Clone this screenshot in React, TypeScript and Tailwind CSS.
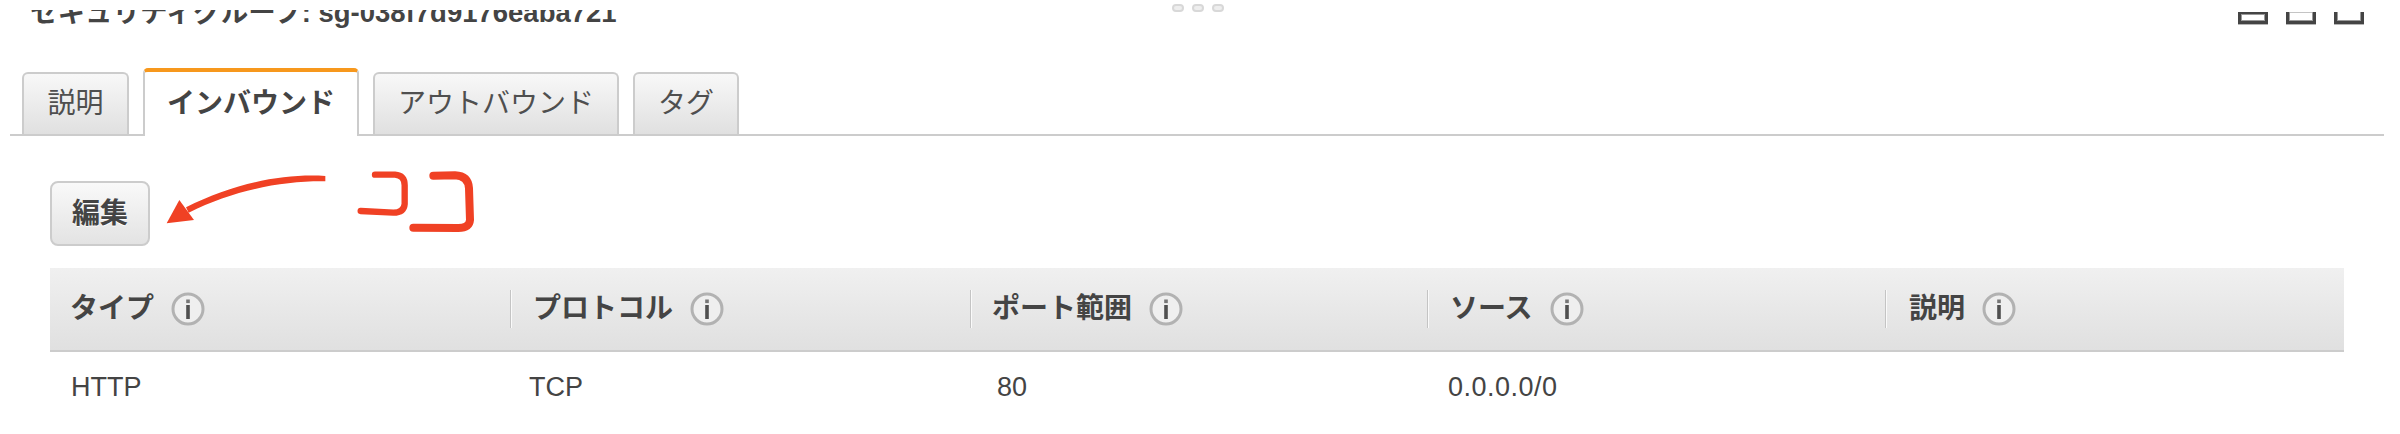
import React from 'react';

const columns = [
  { title: 'タイプ', value: 'HTTP', head: 'pl-[20px]', cell: 'pl-[21px]' },
  { title: 'プロトコル', value: 'TCP', head: 'pl-[21px]', cell: 'pl-[19px]' },
  { title: 'ポート範囲', value: '80', head: 'pl-[20px]', cell: 'pl-[27px]' },
  { title: 'ソース', value: '0.0.0.0/0', head: 'pl-[21px]', cell: 'pl-[21px] tracking-[0.5px]' },
  { title: '説明', value: '', head: 'pl-[22px]', cell: 'pl-[24px]' },
];

function InfoIcon() {
  return (
    <svg viewBox="0 0 34 34" className="w-[34px] h-[34px] shrink-0">
      <circle cx="17" cy="17" r="15" fill="#efefef" stroke="#b2b2b2" strokeWidth="3" />
      <rect x="15.2" y="7.5" width="3.6" height="3.6" fill="#777777" />
      <rect x="15.2" y="13" width="3.6" height="14" fill="#505050" />
    </svg>
  );
}

function PanelIcon({ variant }: { variant: 'full' | 'open' | 'bottom' }) {
  return (
    <svg viewBox="0 0 30 13" className="w-[30px] h-[13px]">
      <rect x="0" y="12" width="30" height="1" fill="#b5b5b5" />
      <rect x="0" y="0" width="30" height="12" fill="#444444" />
      {variant === 'full' && (
        <>
          <rect x="3" y="2" width="24" height="7" fill="#999999" />
          <rect x="4" y="3" width="22" height="5" fill="#ffffff" />
        </>
      )}
      {variant === 'open' && (
        <>
          <rect x="3" y="0" width="24" height="9" fill="#999999" />
          <rect x="4" y="1" width="22" height="7" fill="#ffffff" />
          <rect x="4" y="0" width="22" height="1" fill="#c4c4c4" />
        </>
      )}
      {variant === 'bottom' && (
        <>
          <rect x="3" y="0" width="24" height="9" fill="#999999" />
          <rect x="4" y="0" width="22" height="8" fill="#ffffff" />
        </>
      )}
    </svg>
  );
}

function Tab({ label, width, active }: { label: string; width: string; active?: boolean }) {
  if (active) {
    return (
      <div className={`${width} h-[68px] -mb-[2px] flex items-center justify-center bg-white rounded-t-[5px] border-x-2 border-[#cccccc] border-t-4 border-t-[#f7981d] pb-[1px] text-[28px] font-bold text-[#444444]`}>
        {label}
      </div>
    );
  }
  return (
    <div className={`${width} h-[62px] flex items-center justify-center rounded-t-[6px] border-x-2 border-t-2 border-[#cccccc] bg-gradient-to-b from-[#f8f8f8] to-[#e0e0e0] text-[28px] text-[#4f4f4f]`}>
      {label}
    </div>
  );
}

export default function App() {
  return (
    <div className="relative w-[2400px] h-[434px] overflow-hidden bg-white text-[#444444] font-['Liberation_Sans','Noto_Sans_CJK_JP',sans-serif]">
      {/* Title bar, the top of the title is cut off in the screenshot */}
      <div className="flex items-start h-[68px] pl-[30px] pr-[36px]">
        <div className="w-[1142px] h-[18px] mt-[10px] overflow-hidden">
          <div className="-mt-[11px] text-[27.5px] leading-[28px] font-bold whitespace-nowrap">
            セキュリティグループ: sg-038f7d9176eaba721
          </div>
        </div>
        <div className="flex gap-2 mt-1">
          <div className="w-3 h-2 rounded-full bg-[#eeeeee] border-2 border-[#d8d8d8]" />
          <div className="w-3 h-2 rounded-full bg-[#eeeeee] border-2 border-[#d8d8d8]" />
          <div className="w-3 h-2 rounded-full bg-[#eeeeee] border-2 border-[#d8d8d8]" />
        </div>
        <div className="ml-auto flex gap-[18px] mt-3">
          <PanelIcon variant="full" />
          <PanelIcon variant="open" />
          <PanelIcon variant="bottom" />
        </div>
      </div>

      {/* Tabs */}
      <div className="flex items-end gap-[14px] ml-[10px] mr-[16px] pl-3 border-b-2 border-[#cccccc]">
        <Tab label="説明" width="w-[107px]" />
        <Tab label="インバウンド" width="w-[216px]" active />
        <Tab label="アウトバウンド" width="w-[246px]" />
        <Tab label="タグ" width="w-[106px]" />
      </div>

      <div className="ml-[50px] w-[2294px]">
        <button className="mt-[45px] w-[100px] h-[65px] flex items-center justify-center rounded-lg border-2 border-[#cccccc] bg-gradient-to-b from-[#f9f9f9] to-[#e3e3e3] text-[28px] font-bold text-[#444444] [text-shadow:0_1px_0_#ffffff]">
          編集
        </button>

        {/* Rules table */}
        <div className="mt-[22px] grid grid-cols-[460px_460px_457px_458px_1fr]">
          {columns.map((col, i) => (
            <div key={col.title} className="h-[84px] flex items-center bg-gradient-to-b from-[#f0f0f0] to-[#e0e0e0] border-b-2 border-[#cccccc]">
              {i > 0 && <div className="w-[2px] h-[38px] bg-[#fafafa] border-l border-[#c4c4c4]" />}
              <div className={`flex items-center gap-[17px] ${col.head}`}>
                <span className="text-[28px] font-bold">{col.title}</span>
                <InfoIcon />
              </div>
            </div>
          ))}
          {columns.map((col) => (
            <div key={col.title} className={`h-[68px] pt-[2px] flex items-center text-[27px] ${col.cell}`}>
              {col.value}
            </div>
          ))}
        </div>
      </div>

      {/* Hand-drawn annotation */}
      <svg viewBox="0 0 1020 270" className="absolute left-[150px] top-[160px] w-[340px] h-[90px]" fill="none">
        <path d="M526 48 C400 40 250 70 108 142 L116 158 C250 90 400 62 526 64 Z" fill="#f04124" />
        <path d="M88 120 L50 190 L132 180 Z" fill="#f04124" />
        <path d="M675 44 L735 44 Q764 46 764 76 L764 132 Q762 158 730 158 L632 153" stroke="#f04124" strokeWidth="19" strokeLinecap="round" strokeLinejoin="round" />
        <path d="M850 47 L915 46 Q955 48 957 85 L960 180 Q958 204 925 204 L790 203" stroke="#f04124" strokeWidth="24" strokeLinecap="round" strokeLinejoin="round" />
      </svg>
    </div>
  );
}
